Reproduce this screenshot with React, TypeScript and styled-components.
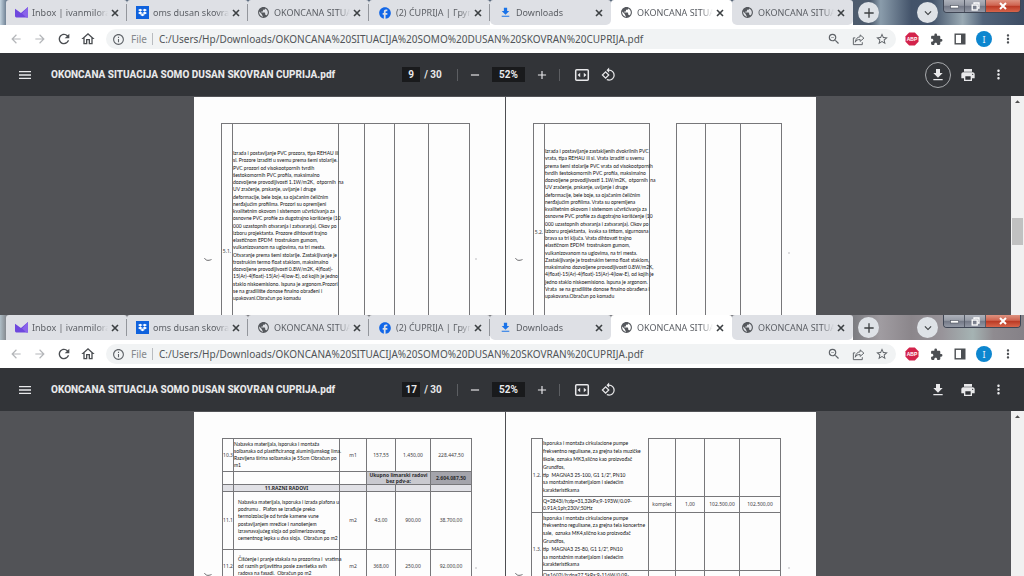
import React from "react";
import styled, { createGlobalStyle, css } from "styled-components";
import {
  MdArrowBack, MdArrowForward, MdRefresh, MdOutlineHome, MdInfoOutline, MdZoomOut, MdStarBorder,
  MdExtension, MdMoreVert, MdMenu, MdRemove, MdAdd, MdFileDownload, MdPrint, MdExpandMore,
  MdPublic, MdFacebook, MdRotate90DegreesCcw,
} from "react-icons/md";
import { FaDropbox } from "react-icons/fa";

const GlobalStyle = createGlobalStyle`
  * { box-sizing: border-box; }
  body { margin: 0; background: #525357; }
  button, input { font: inherit; color: inherit; border: 0; background: none; padding: 0; margin: 0; }
  button { display: flex; align-items: center; justify-content: center; flex: none; cursor: pointer; }
  svg { display: block; flex: none; }
`;

const Screen = styled.main`
  display: grid;
  grid-template-rows: 315fr 261fr;
  height: 100vh;
  overflow: hidden;
`;

const BrowserWindow = styled.section`
  display: flex;
  flex-direction: column;
  min-height: 0;
  overflow: hidden;
  font-family: "Noto Sans", "Open Sans", sans-serif;
`;

/* ---------- tab strip ---------- */

const wallpapers = {
  blue: "linear-gradient(90deg, #c3d3df 0, #55677c 8px, #4d5b6d 85%, #8a9cab 86%, #43536a 89%, #44546b 91%, #9aaab4 94%, #51637a 96%, #3d4c63 100%)",
  grey: "linear-gradient(90deg, #aebdc6 0, #77787d 8px, #77787d 83%, #a09ca1 86%, #8b868b 89%, #98949a 92%, #a5b3b3 95%, #8f8b90 97%, #858187 100%)",
};

const TabStrip = styled.div<{ $wallpaper: keyof typeof wallpapers }>`
  display: flex;
  flex: none;
  height: 25px;
  padding-left: 6px;
  background: ${(p) => wallpapers[p.$wallpaper]};
`;

const TabSlot = styled.div<{ $active: boolean; $divider: boolean }>`
  display: flex;
  flex: 0 1 121px;
  min-width: 0;
  background: ${(p) => (p.$active ? "none" : "linear-gradient(transparent 50%, #ffffff 50%)")};
  > div {
    background: ${(p) => (p.$active ? "#ffffff" : "#dee0e5")};
    border-radius: 3px 3px ${(p) => (p.$divider || p.$active ? "0 0" : "5px 5px")};
  }
  > div::after {
    content: "";
    width: 1px;
    height: 17px;
    flex: none;
    background: ${(p) => (p.$divider ? "#93969c" : "transparent")};
  }
`;

const Tab = styled.div`
  display: flex;
  align-items: center;
  flex: 1;
  min-width: 0;
  padding-left: 9px;
`;

const TabButton = styled.button`
  && { flex: 1; min-width: 0; gap: 4px; justify-content: flex-start; text-align: left; }
`;

const TabTitle = styled.span`
  flex: 1;
  min-width: 0;
  overflow: hidden;
  white-space: pre;
  font-size: 9px;
  line-height: 16px;
  color: #5d6066;
  mask-image: linear-gradient(90deg, #000 84%, transparent 100%);
`;

const CloseTab = styled.button`
  width: 14px;
  height: 14px;
  margin: 0 4px 0 0;
  color: #3c4043;
`;

const RoundButton = styled.button`
  align-self: center;
  width: 21px;
  height: 21px;
  border-radius: 50%;
  && { background: #dee2e7; color: #3c4043; }
`;

const NewTab = styled(RoundButton)`&& { margin-left: 5px; }`;
const SearchTabs = styled(RoundButton)`&& { margin-left: auto; }`;

const Controls = styled.div`
  display: flex;
  height: 13px;
  margin: 0 3px 0 5px;
  border: 1px solid #3f4655;
  border-top: 0;
  border-radius: 0 0 4px 4px;
  overflow: hidden;
`;

const Control = styled.button<{ $danger?: boolean }>`
  width: ${(p) => (p.$danger ? 34 : 21)}px;
  color: #ffffff;
  border-right: ${(p) => (p.$danger ? 0 : 1)}px solid #545a66;
  background: ${(p) =>
    p.$danger
      ? "linear-gradient(#dd9280 0, #cf6450 45%, #b93823 50%, #d8654b 100%)"
      : "linear-gradient(#aeb2bb 0, #959aa5 45%, #737886 50%, #9298a5 100%)"};
`;

/* ---------- address bar ---------- */

const AddressBar = styled.div`
  display: flex;
  align-items: center;
  flex: none;
  height: 28px;
  padding: 0 8px 0 8px;
  background: #ffffff;
  color: #5f6368;
`;

const NavButton = styled.button<{ $off?: boolean }>`
  width: 16px;
  height: 16px;
  margin-right: 8px;
  color: ${(p) => (p.$off ? "#b4b6b9" : "#4b4e52")};
`;

const Omnibox = styled.label`
  display: flex;
  align-items: center;
  flex: 1;
  min-width: 0;
  height: 20px;
  margin: 0 8px 0 2px;
  padding: 0 7px 0 6px;
  border-radius: 10px;
  background: #f1f3f4;
  font-size: 10px;
`;

const Scheme = styled.span`
  margin-left: 6px;
  padding-right: 5px;
  border-right: 1px solid #b9bcc0;
  line-height: 12px;
  color: #85888c;
`;

const Url = styled.input`
  && {
    flex: 1;
    min-width: 0;
    margin-left: 6px;
    height: 16px;
    font-size: 10px;
    color: #505357;
    outline: none;
  }
`;

const OmniButton = styled.button`
  width: 14px;
  height: 16px;
  margin-left: 10px;
`;

const Extensions = styled.div`
  display: flex;
  align-items: center;
  gap: 8px;
`;

const ExtButton = styled.button`
  width: 16px;
  height: 16px;
  color: #4b4e52;
`;

const Avatar = styled(ExtButton)`
  && {
    border-radius: 50%;
    background: #0d86cf;
    color: #e8f3fb;
    font-size: 9px;
  }
`;

/* ---------- viewer toolbar ---------- */

const Toolbar = styled.div`
  display: flex;
  align-items: center;
  flex: none;
  height: 43px;
  padding: 0 13px 0 17px;
  background: #323438;
  color: #e8e8ea;
  font-family: Roboto, sans-serif;
  font-size: 10px;
  font-weight: 700;
`;

const ToolSide = styled.div<{ $end?: boolean }>`
  display: flex;
  align-items: center;
  flex: 1;
  min-width: 0;
  gap: ${(p) => (p.$end ? 4 : 18)}px;
  justify-content: ${(p) => (p.$end ? "flex-end" : "flex-start")};
`;

const FileName = styled.h1`
  margin: 0;
  font-size: 10px;
  line-height: 16px;
  font-weight: 800;
  white-space: nowrap;
`;

const ToolCenter = styled.div`
  display: flex;
  align-items: center;
  gap: 9px;
  margin-right: 9px;
`;

const ToolGroup = styled.div<{ $gap: number }>`
  display: flex;
  align-items: center;
  gap: ${(p) => p.$gap}px;
  &:first-child { margin-right: 6px; }
  &:last-child { margin-left: 5px; }
`;

const Field = styled.input<{ $wide?: boolean }>`
  && {
    width: ${(p) => (p.$wide ? 33 : 18)}px;
    height: 15px;
    background: #191a1c;
    text-align: center;
    outline: none;
  }
`;

const PageTotal = styled.span`
  white-space: nowrap;
`;

const Divider = styled.span`
  width: 1px;
  height: 12px;
  background: #5c5e62;
`;

const ToolButton = styled.button`
  width: 16px;
  height: 16px;
`;

const ActionButton = styled.button<{ $ring?: boolean }>`
  width: 26px;
  height: 26px;
  border-radius: 50%;
  ${(p) => p.$ring && css`&& { border: 1px solid #a9abae; }`}
`;

/* ---------- document ---------- */

const Viewport = styled.div`
  display: flex;
  flex: 1;
  min-height: 0;
  background: #525357;
`;

const Canvas = styled.div`
  display: flex;
  justify-content: center;
  align-items: flex-start;
  flex: 1;
  min-width: 0;
  overflow: hidden;
  padding: 1px 1px 0 0;
`;

const Sheet = styled.article<{ $inset: number }>`
  position: relative;
  display: flex;
  align-items: flex-start;
  gap: 26px;
  flex: 0 1 311px;
  min-height: 440px;
  padding: 26px 0 0 ${(p) => p.$inset}px;
  background: #fdfdfd;
  & + & { border-left: 1px solid #4d4e52; }
`;

const Scrollbar = styled.div`
  width: 13px;
  padding: 2px 1px;
  background: #f1f1f1;
  display: flex;
  flex-direction: column;
  align-items: center;
`;

const Thumb = styled.span`
  width: 11px;
  height: 27px;
  margin-top: 113px;
  background: #c1c1c1;
`;

const Grid = styled.table<{ $width: number }>`
  width: ${(p) => p.$width}px;
  table-layout: fixed;
  border-collapse: collapse;
  font-size: 5px;
  line-height: 7px;
  color: #3c3c3e;
`;

const Row = styled.tr<{ $height: number }>`
  height: ${(p) => p.$height}px;
`;

const Column = styled.col<{ $width: number }>`
  width: ${(p) => p.$width}px;
`;

const Cell = styled.td<{ $shade?: string; $open?: boolean; $below?: number }>`
  padding: 0 0 ${(p) => p.$below ?? 0}px;
  border: 1px solid #77777a;
  ${(p) => p.$open && css`border-top-color: transparent; border-top-style: hidden;`}
  background: ${(p) => p.$shade ?? "none"};
  text-align: center;
  vertical-align: middle;
  white-space: nowrap;
`;

const Heading = styled(Cell)`
  font-weight: 700;
  color: #2c2c2e;
  white-space: pre;
  line-height: 6px;
`;

const Lines = styled.div<{ $height: number; $indent?: boolean }>`
  display: flex;
  flex-direction: column;
  justify-content: space-between;
  height: ${(p) => p.$height}px;
  padding-left: ${(p) => (p.$indent ? 4 : 0)}px;
  text-align: left;
  white-space: pre;
  font-family: Lato, "Liberation Sans", sans-serif;
  font-size: 5px;
  line-height: 7px;
  color: #101012;
`;

const Mark = styled.svg<{ $x: number; $y: number }>`
  position: absolute;
  left: ${(p) => p.$x}px;
  top: ${(p) => p.$y}px;
`;

/* ---------- icons ---------- */

const CrossIcon = ({ size, weight }: { size: number; weight: number }) => (
  <svg width={size} height={size} viewBox="0 0 8 8" fill="none" stroke="currentColor" strokeWidth={weight}>
    <path d="M1 1 7 7M7 1 1 7" />
  </svg>
);

const MailIcon = () => (
  <svg width="13" height="13" viewBox="0 0 12 12">
    <path d="M0 2.500 5.500 6.500 12 1V10.500H1.200A1.200 1.200 0 0 1 0 9.300Z" fill="#6f48de" />
    <path d="M6.500 7 12 1V10.500H10.500Z" fill="#8a64ea" />
  </svg>
);

const DropboxTile = styled.span`
  display: grid;
  place-items: center;
  width: 13px;
  height: 13px;
  flex: none;
  background: #0f62dd;
  color: #ffffff;
`;

const ShareIcon = () => (
  <svg width="13" height="13" viewBox="0 0 24 24" fill="none" stroke="currentColor" strokeWidth="1.8">
    <path d="M6 9H2.500V21.500H19V17" />
    <path d="M15 3.500 22 9.500 15 15.500V12C10 12 7.500 13.500 6 17C6.500 11.500 9.500 7.500 15 7Z" strokeLinejoin="round" />
  </svg>
);

const PanelIcon = () => (
  <svg width="12" height="12" viewBox="0 0 12 12">
    <rect x="1.200" y="1.200" width="9.600" height="9.600" fill="none" stroke="currentColor" strokeWidth="1.400" />
    <rect x="7" y="1" width="4" height="10" fill="currentColor" />
  </svg>
);

const AdblockIcon = () => (
  <svg width="14" height="14" viewBox="0 0 14 14">
    <path d="M4.200 0.500H9.800L13.500 4.200V9.800L9.800 13.500H4.200L0.500 9.800V4.200Z" fill="#d3234b" />
    <text x="7" y="9" textAnchor="middle" fontFamily="Liberation Sans, sans-serif" fontWeight="700" fontSize="5" fill="#ffffff">ABP</text>
  </svg>
);

const FitIcon = () => (
  <svg width="16" height="16" viewBox="0 0 16 16">
    <rect x="1.700" y="2.700" width="12.600" height="10.600" rx="1" fill="none" stroke="currentColor" strokeWidth="1.500" />
    <path d="M3.600 8 6.200 5.800V10.200ZM12.400 8 9.800 5.800V10.200Z" fill="currentColor" />
  </svg>
);

const MinimizeIcon = () => (
  <svg width="9" height="8" viewBox="0 0 9 8"><rect x="0.500" y="3.500" width="8" height="2.500" fill="#fff" stroke="#4c515c" strokeWidth="0.600" /></svg>
);

const RestoreIcon = () => (
  <svg width="9" height="9" viewBox="0 0 9 9" fill="none" stroke="#fff" strokeWidth="1.300">
    <path d="M3 2V1H8V6H7" />
    <rect x="1.200" y="3" width="5" height="5" />
  </svg>
);

/* ---------- content ---------- */

const tabs = [
  { icon: <MailIcon />, title: "Inbox | ivanmilorad" },
  { icon: <DropboxTile><FaDropbox size={9} /></DropboxTile>, title: "oms dusan skovran" },
  { icon: <MdPublic size={13} color="#55585d" />, title: "OKONCANA SITUACIJA" },
  { icon: <MdFacebook size={14} color="#1267e8" />, title: "(2) ĆUPRIJA | Група" },
  { icon: <MdFileDownload size={13} color="#1a73e8" />, title: "Downloads" },
  { icon: <MdPublic size={13} color="#55585d" />, title: "OKONCANA SITUACIJA" },
  { icon: <MdPublic size={13} color="#55585d" />, title: "OKONCANA SITUACIJA" },
];
const ACTIVE_TAB = 5;

const windowsText = [
  "Izrada i postavljanje PVC prozora, tipa REHAU ili",
  "sl. Prozore izraditi u svemu prema šemi stolarije.",
  "PVC prozori od visokootpornih tvrdih",
  "šestokomornih PVC profila, maksimalno",
  "dozvoljene provodljivosti 1.1W/m2K,  otpornih  na",
  "UV zračenje, prskanje, uvijanje i druge",
  "deformacije, bele boje, sa ojačanim čeličnim",
  "nerđajućim profilima. Prozori su opremljeni",
  "kvalitetnim okovom i sistemom učvršćivanja za",
  "osnovne PVC profile za dugotrajno korišćenje (10",
  "000 uzastopnih otvaranja i zatvaranja). Okov po",
  "izboru projektanta. Prozore dihtovati trajno",
  "elastičnom EPDM  trostrukom gumom,",
  "vulkanizovanom na uglovima, na tri mesta.",
  "Otvaranje prema šemi stolarije. Zastakljivanje je",
  "trostrukim termo float staklom, maksimalno",
  "dozvoljene provodljivosti 0.8W/m2K, 4(float)-",
  "15(Ar)-4(float)-15(Ar)-4(low-E), od kojih je jedno",
  "staklo niskoemisiono. Ispuna je argonom.Prozori",
  "se na gradilište donose finalno obrađeni i",
  "upakovani.Obračun po komadu",
];

const doorsText = [
  "Izrada i postavljanje zastakljenih dvokrilnih PVC",
  "vrata, tipa REHAU ili sl. Vrata izraditi u svemu",
  "prema šemi stolarije PVC vrata od visokootpornih",
  "tvrdih šestokomornih PVC profila, maksimalno",
  "dozvoljene provodljivosti 1.1W/m2K,  otpornih  na",
  "UV zračenje, prskanje, uvijanje i druge",
  "deformacije, bele boje, sa ojačanim čeličnim",
  "nerđajućim profilima. Vrata su opremljena",
  "kvalitetnim okovom i sistemom učvršćivanja za",
  "osnovne PVC profile za dugotrajno korišćenje (10",
  "000 uzastopnih otvaranja i zatvaranja). Okov po",
  "izboru projektanta,  kvaka sa štitom, sigurnosna",
  "brava sa tri ključa. Vrata dihtovati trajno",
  "elastičnom EPDM  trostrukom gumom,",
  "vulkanizovanom na uglovima, na tri mesta.",
  "Zastakljivanje je trostrukim termo float staklom,",
  "maksimalno dozvoljene provodljivosti 0.8W/m2K,",
  "4(float)-15(Ar)-4(float)-15(Ar)-4(low-E), od kojih je",
  "jedno staklo niskoemisiono. Ispuna je argonom.",
  "Vrata  se na gradilište donose finalno obrađena i",
  "upakovana.Obračun po komadu",
];

const sillText = [
  "Nabavka materijala, isporuka i montaža",
  "solbanaka od plastificiranog aluminijumskog lima.",
  "Razvijena širina solbanaka je 55cm Obračun po",
  "m1",
];

const ceilingText = [
  "Nabavka materijala, isporuka i izrada plafona u",
  "podrumu .  Plafon se izrađuje preko",
  "termoizolacije od tvrde kamene vune",
  "postavljanjem mrežice i nanošenjem",
  "izravnavajućeg sloja od polimerizovanog",
  "cementnog lepka u dva sloja.  Obračun po m2",
];

const cleaningText = [
  "Čišćenje i pranje stakala na prozorima i  vratima",
  "od raznih prljavština posle završetka svih",
  "radova na fasadi.  Obračun po m2",
];

const pumpText = (place: string[], model: string) => [
  "Isporuka i montaža cirkulacione pumpe",
  ...place,
  "Grundfos,",
  model,
  "sa montažnim materijalom i sledećim",
  "karakteristikama",
];

const Columns = ({ widths }: { widths: number[] }) => (
  <colgroup>{widths.map((w, i) => <Column key={i} $width={w} />)}</colgroup>
);

const Text = ({ lines, height, indent }: { lines: string[]; height: number; indent?: boolean }) => (
  <Lines $height={height} $indent={indent}>{lines.map((l, i) => <span key={i}>{l}</span>)}</Lines>
);

const Tick = ({ x, y }: { x: number; y: number }) => (
  <Mark $x={x} $y={y} width="8" height="5" viewBox="0 0 8 5" fill="none" stroke="#6b6b6e">
    <path d="M0.500 1C1.500 3.500 4 4 7.500 2.500" />
  </Mark>
);

const Speck = ({ x, y }: { x: number; y: number }) => (
  <Mark $x={x} $y={y} width="2" height="2"><circle cx="1" cy="1" r="0.800" fill="#b5b5b8" /></Mark>
);

const Joinery = () => (
  <>
    <Sheet $inset={27}>
      <Grid $width={249}>
        <Columns widths={[11, 106, 26, 30, 34, 41]} />
        <tbody>
          <Row $height={255}>
            <Cell>5.1.</Cell>
            <Cell $below={50}><Text lines={windowsText} height={152} /></Cell>
            <Cell /><Cell /><Cell /><Cell />
          </Row>
        </tbody>
      </Grid>
      <Tick x={10} y={160} />
      <Speck x={281} y={161} />
    </Sheet>
    <Sheet $inset={27}>
      <Grid $width={117}>
        <Columns widths={[11, 105]} />
        <tbody>
          <Row $height={217}>
            <Cell>5.2.</Cell>
            <Cell $below={16}><Text lines={doorsText} height={152} /></Cell>
          </Row>
        </tbody>
      </Grid>
      <Grid $width={106}>
        <Columns widths={[29, 35, 41]} />
        <tbody><Row $height={217}><Cell /><Cell /><Cell /></Row></tbody>
      </Grid>
      <Tick x={9} y={160} />
      <Speck x={282} y={155} />
    </Sheet>
  </>
);

const Finishing = () => (
  <>
    <Sheet $inset={28}>
      <Grid $width={249}>
        <Columns widths={[11, 106, 27, 29, 35, 41]} />
        <tbody>
          <Row $height={33}>
            <Cell>10.3</Cell>
            <Cell><Text lines={sillText} height={29} /></Cell>
            <Cell>m1</Cell><Cell>157,55</Cell><Cell>1.450,00</Cell><Cell>228.447,50</Cell>
          </Row>
          <Row $height={13}>
            <Cell /><Cell /><Cell />
            <Heading colSpan={2} $shade="#c9c9cf">{"Ukupno limarski radovi\nbez pdv-a:"}</Heading>
            <Heading $shade="#a4a4ab">2.604.087,50</Heading>
          </Row>
          <Row $height={7}>
            <Cell $shade="#e1e1e6" />
            <Heading $shade="#e1e1e6">11.RAZNI RADOVI</Heading>
            <Cell $shade="#e1e1e6" /><Cell $shade="#e1e1e6" /><Cell $shade="#e1e1e6" /><Cell $shade="#e1e1e6" />
          </Row>
          <Row $height={58}>
            <Cell>11.1</Cell>
            <Cell><Text lines={ceilingText} height={43} indent /></Cell>
            <Cell>m2</Cell><Cell>43,00</Cell><Cell>900,00</Cell><Cell>38.700,00</Cell>
          </Row>
          <Row $height={34}>
            <Cell>11.2</Cell>
            <Cell><Text lines={cleaningText} height={21} indent /></Cell>
            <Cell>m2</Cell><Cell>368,00</Cell><Cell>250,00</Cell><Cell>92.000,00</Cell>
          </Row>
        </tbody>
      </Grid>
      <Tick x={10} y={160} />
      <Speck x={281} y={155} />
    </Sheet>
    <Sheet $inset={25}>
      <Grid $width={249}>
        <Columns widths={[11, 106, 27, 29, 35, 41]} />
        <tbody>
          <Row $height={58}>
            <Cell rowSpan={2}>1.2.</Cell>
            <Cell $open>
              <Text height={54} lines={pumpText(["frekventno regulisane, za grejna tela muzičke", "škole, oznaka MK3,slično kao proizvođač"], "tip  MAGNA3 25-100, G1 1/2\", PN10")} />
            </Cell>
            <Cell /><Cell /><Cell /><Cell />
          </Row>
          <Row $height={16}>
            <Cell><Text height={14} lines={["Q=2843l/h;dp=31,32kPa;9-193W/0.09-", "0.91A;1ph;230V;50Hz"]} /></Cell>
            <Cell>komplet</Cell><Cell>1,00</Cell><Cell>102.500,00</Cell><Cell>102.500,00</Cell>
          </Row>
          <Row $height={58}>
            <Cell rowSpan={2}>1.3.</Cell>
            <Cell>
              <Text height={54} lines={pumpText(["frekventno regulisane, za grejna tela koncertne", "sale,  oznaka MK4,slično kao proizvođač"], "tip  MAGNA3 25-80, G1 1/2\", PN10")} />
            </Cell>
            <Cell /><Cell /><Cell /><Cell />
          </Row>
          <Row $height={16}>
            <Cell><Text height={14} lines={["Q=1602l/h;dp=27,5kPa;9-116W/0.09-", "0.91A;1ph;230V;50Hz"]} /></Cell>
            <Cell /><Cell /><Cell /><Cell>98.500,00</Cell>
          </Row>
        </tbody>
      </Grid>
      <Tick x={9} y={160} />
      <Speck x={282} y={155} />
    </Sheet>
  </>
);

type BrowserProps = {
  wallpaper: keyof typeof wallpapers;
  page: number;
  downloadFocused?: boolean;
  thumb?: boolean;
  children: React.ReactNode;
};

const Browser = ({ wallpaper, page, downloadFocused, thumb, children }: BrowserProps) => (
  <BrowserWindow>
    <TabStrip $wallpaper={wallpaper}>
      {tabs.map((t, i) => (
        <TabSlot key={i} $active={i === ACTIVE_TAB} $divider={i < ACTIVE_TAB - 1}>
          <Tab>
            <TabButton>{t.icon}<TabTitle>{t.title}</TabTitle></TabButton>
            <CloseTab aria-label="Close tab"><CrossIcon size={8} weight={1.6} /></CloseTab>
          </Tab>
        </TabSlot>
      ))}
      <NewTab aria-label="New tab"><MdAdd size={16} /></NewTab>
      <SearchTabs aria-label="Search tabs"><MdExpandMore size={14} /></SearchTabs>
      <Controls>
        <Control aria-label="Minimize"><MinimizeIcon /></Control>
        <Control aria-label="Restore"><RestoreIcon /></Control>
        <Control aria-label="Close" $danger><CrossIcon size={8} weight={2} /></Control>
      </Controls>
    </TabStrip>

    <AddressBar>
      <NavButton aria-label="Back" $off><MdArrowBack size={14} /></NavButton>
      <NavButton aria-label="Forward" $off><MdArrowForward size={14} /></NavButton>
      <NavButton aria-label="Reload"><MdRefresh size={16} /></NavButton>
      <NavButton aria-label="Home"><MdOutlineHome size={16} /></NavButton>
      <Omnibox>
        <MdInfoOutline size={13} />
        <Scheme>File</Scheme>
        <Url
          aria-label="Address"
          defaultValue="C:/Users/Hp/Downloads/OKONCANA%20SITUACIJA%20SOMO%20DUSAN%20SKOVRAN%20CUPRIJA.pdf"
        />
        <OmniButton aria-label="Zoom"><MdZoomOut size={14} /></OmniButton>
        <OmniButton aria-label="Share"><ShareIcon /></OmniButton>
        <OmniButton aria-label="Bookmark"><MdStarBorder size={14} /></OmniButton>
      </Omnibox>
      <Extensions>
        <ExtButton aria-label="Adblock Plus"><AdblockIcon /></ExtButton>
        <ExtButton aria-label="Extensions"><MdExtension size={13} /></ExtButton>
        <ExtButton aria-label="Side panel"><PanelIcon /></ExtButton>
        <Avatar aria-label="Profile">I</Avatar>
        <ExtButton aria-label="Menu"><MdMoreVert size={14} /></ExtButton>
      </Extensions>
    </AddressBar>

    <Toolbar>
      <ToolSide>
        <button aria-label="Toggle sidebar"><MdMenu size={16} /></button>
        <FileName>OKONCANA SITUACIJA SOMO DUSAN SKOVRAN CUPRIJA.pdf</FileName>
      </ToolSide>
      <ToolCenter>
        <ToolGroup $gap={4}>
          <Field aria-label="Page number" defaultValue={page} />
          <PageTotal>/ 30</PageTotal>
        </ToolGroup>
        <Divider />
        <ToolGroup $gap={9}>
          <ToolButton aria-label="Zoom out"><MdRemove size={14} /></ToolButton>
          <Field aria-label="Zoom level" $wide defaultValue="52%" />
          <ToolButton aria-label="Zoom in"><MdAdd size={14} /></ToolButton>
        </ToolGroup>
        <Divider />
        <ToolGroup $gap={11}>
          <ToolButton aria-label="Fit to page"><FitIcon /></ToolButton>
          <ToolButton aria-label="Rotate counterclockwise"><MdRotate90DegreesCcw size={15} /></ToolButton>
        </ToolGroup>
      </ToolCenter>
      <ToolSide $end>
        <ActionButton aria-label="Download" $ring={downloadFocused}><MdFileDownload size={16} /></ActionButton>
        <ActionButton aria-label="Print"><MdPrint size={16} /></ActionButton>
        <ActionButton aria-label="More actions"><MdMoreVert size={15} /></ActionButton>
      </ToolSide>
    </Toolbar>

    <Viewport>
      <Canvas>{children}</Canvas>
      <Scrollbar>
        <svg width="7" height="7" viewBox="0 0 7 7"><path d="M1 5 3.500 2.200 6 5Z" fill="#505050" /></svg>
        {thumb && <Thumb />}
      </Scrollbar>
    </Viewport>
  </BrowserWindow>
);

export default function App() {
  return (
    <Screen>
      <GlobalStyle />
      <Browser wallpaper="blue" page={9} downloadFocused thumb><Joinery /></Browser>
      <Browser wallpaper="grey" page={17}><Finishing /></Browser>
    </Screen>
  );
}
